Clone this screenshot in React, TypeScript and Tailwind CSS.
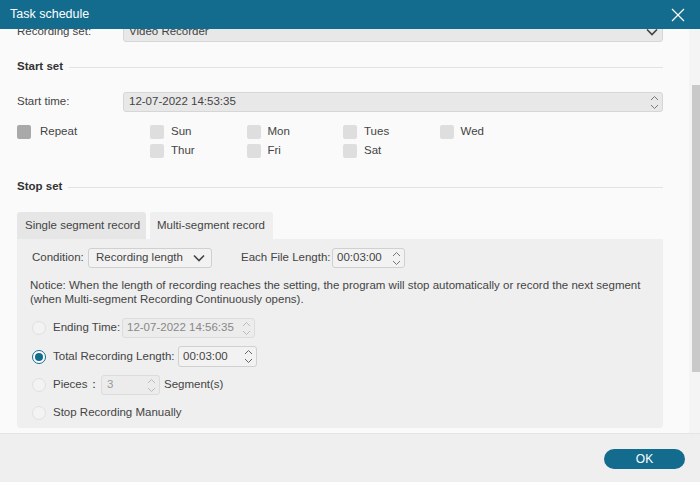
import React from "react";

const Spin = ({ c = "#777" }: { c?: string }) => (
  <svg width="9" height="15" viewBox="0 0 9 15" fill="none" stroke={c} strokeWidth="1">
    <path d="M1 5 L4.5 1.5 L8 5" />
    <path d="M1 10 L4.5 13.5 L8 10" />
  </svg>
);

const Chev = () => (
  <svg width="12" height="8" viewBox="0 0 12 8" fill="none" stroke="#444" strokeWidth="1.6">
    <path d="M1 1.5 L6 6.5 L11 1.5" />
  </svg>
);

const Radio = ({ on = false }: { on?: boolean }) =>
  on ? (
    <div className="w-[14px] h-[14px] rounded-full border-[1.5px] border-[#136b8e] bg-white flex items-center justify-center">
      <div className="w-[8px] h-[8px] rounded-full bg-[#136b8e]" />
    </div>
  ) : (
    <div className="w-[14px] h-[14px] rounded-full border border-[#e0e0e0] bg-[#f3f3f3]" />
  );

const Cb = ({ dark = false }: { dark?: boolean }) => (
  <div className={`w-[14px] h-[14px] rounded-[2px] ${dark ? "bg-[#a9a9a9]" : "bg-[#dedede]"}`} />
);

const Day = ({ label }: { label: string }) => (
  <div className="flex items-center h-[19px] w-[96.5px]">
    <Cb />
    <span className="ml-[7px]">{label}</span>
  </div>
);

export default function App() {
  return (
    <div
      className="w-[700px] h-[482px] flex flex-col bg-[#fafafa] overflow-hidden text-[11.5px] text-[#444]"
      style={{ fontFamily: '"Liberation Sans", Arial, sans-serif' }}
    >
      <div className="h-[29px] shrink-0 bg-[#136b8e] flex items-center justify-between pl-[10px] pr-[15px] text-white relative z-10">
        <span className="text-[12.5px]">Task schedule</span>
        <svg width="14" height="14" viewBox="0 0 14 14" stroke="#fff" strokeWidth="1.2">
          <path d="M1 1 L13 13 M13 1 L1 13" />
        </svg>
      </div>
      <div className="h-[405px] shrink-0 flex border-b border-[#e4e4e4]">
        <div className="flex-1 overflow-hidden">
          <div className="-mt-[8px] pl-[17px] pr-[26px]">
            <div className="flex items-center h-[21px]">
              <span className="w-[106px]">Recording set:</span>
              <div className="flex-1 h-[21px] bg-[#e8e8e8] border border-[#d6d6d6] rounded-[3px] flex items-center justify-between pl-[5px] pr-[4px]">
                <span>Video Recorder</span>
                <Chev />
              </div>
            </div>
            <div className="mt-[17px] h-[16px] flex items-center">
              <span className="font-bold text-[#333]">Start set</span>
              <div className="flex-1 ml-[6px] h-px bg-[#e2e2e2]" />
            </div>
            <div className="mt-[17px] flex items-center h-[20px]">
              <span className="w-[106px]">Start time:</span>
              <div className="flex-1 h-[20px] bg-[#e8e8e8] border border-[#d6d6d6] rounded-[3px] flex items-center justify-between pl-[5px] pr-[3px]">
                <span>12-07-2022 14:53:35</span>
                <Spin />
              </div>
            </div>
            <div className="mt-[10px] flex">
              <div className="w-[133px] flex items-start">
                <div className="flex items-center h-[19px]">
                  <Cb dark />
                  <span className="ml-[9px]">Repeat</span>
                </div>
              </div>
              <div className="flex flex-col">
                <div className="flex">
                  <Day label="Sun" />
                  <Day label="Mon" />
                  <Day label="Tues" />
                  <Day label="Wed" />
                </div>
                <div className="flex">
                  <Day label="Thur" />
                  <Day label="Fri" />
                  <Day label="Sat" />
                </div>
              </div>
            </div>
            <div className="mt-[19px] h-[16px] flex items-center">
              <span className="font-bold text-[#333]">Stop set</span>
              <div className="flex-1 ml-[6px] h-px bg-[#e2e2e2]" />
            </div>
            <div className="mt-[17px] flex items-end gap-[4px] h-[27px]">
              <div className="h-[27px] w-[129px] bg-[#e6e6e6] rounded-t-[3px] flex items-center pl-[8px]">
                Single segment record
              </div>
              <div className="h-[27px] w-[123px] bg-[#efefef] rounded-t-[3px] flex items-center pl-[7px]">
                Multi-segment record
              </div>
            </div>
            <div className="bg-[#efefef] rounded-b-[4px] pl-[15px] pr-[15px] pt-[9px] pb-[5px]">
              <div className="flex items-center h-[20px]">
                <span className="w-[56px]">Condition:</span>
                <div className="w-[124px] h-[20px] border border-[#d0d0d0] bg-[#f2f2f2] rounded-[3px] flex items-center justify-between pl-[7px] pr-[6px]">
                  <span>Recording length</span>
                  <Chev />
                </div>
                <span className="ml-[29px] w-[91px]">Each File Length:</span>
                <div className="w-[73px] h-[20px] border border-[#d0d0d0] bg-[#f2f2f2] rounded-[3px] flex items-center justify-between pl-[4px] pr-[3px]">
                  <span>00:03:00</span>
                  <Spin />
                </div>
              </div>
              <div className="mt-[10px] -ml-[2px] leading-[14px]">
                Notice: When the length of recording reaches the setting, the program will stop automatically or record the next segment
                <br />
                (when Multi-segment Recording Continuously opens).
              </div>
              <div className="mt-[12px] flex items-center h-[20px]">
                <Radio />
                <span className="ml-[7px] w-[69px]">Ending Time:</span>
                <div className="w-[133px] h-[20px] border border-[#dcdcdc] bg-[#ececec] rounded-[3px] flex items-center justify-between pl-[4px] pr-[3px] text-[#888]">
                  <span>12-07-2022 14:56:35</span>
                  <Spin c="#bbb" />
                </div>
              </div>
              <div className="mt-[8px] flex items-center h-[21px]">
                <Radio on />
                <span className="ml-[7px] w-[125px]">Total Recording Length:</span>
                <div className="w-[79px] h-[21px] border border-[#d0d0d0] bg-[#f2f2f2] rounded-[3px] flex items-center justify-between pl-[4px] pr-[3px]">
                  <span>00:03:00</span>
                  <Spin c="#666" />
                </div>
              </div>
              <div className="mt-[8px] flex items-center h-[20px]">
                <Radio />
                <span className="ml-[7px] w-[48px]">Pieces：</span>
                <div className="w-[59px] h-[20px] border border-[#dcdcdc] bg-[#ececec] rounded-[3px] flex items-center justify-between pl-[5px] pr-[3px] text-[#999]">
                  <span>3</span>
                  <Spin c="#bbb" />
                </div>
                <span className="ml-[4px]">Segment(s)</span>
              </div>
              <div className="mt-[8px] flex items-center h-[20px]">
                <Radio />
                <span className="ml-[7px]">Stop Recording Manually</span>
              </div>
            </div>
          </div>
        </div>
        <div className="w-[11px] bg-[#f4f4f4] pt-[56px]">
          <div className="ml-[3px] w-[8px] h-[287px] bg-[#c9c9c9]" />
        </div>
      </div>
      <div className="flex-1 bg-[#efefef] flex justify-end items-start pt-[15px] pr-[15px]">
        <div className="w-[81px] h-[20px] rounded-full bg-[#136b8e] text-white text-[12px] flex items-center justify-center">
          OK
        </div>
      </div>
    </div>
  );
}
